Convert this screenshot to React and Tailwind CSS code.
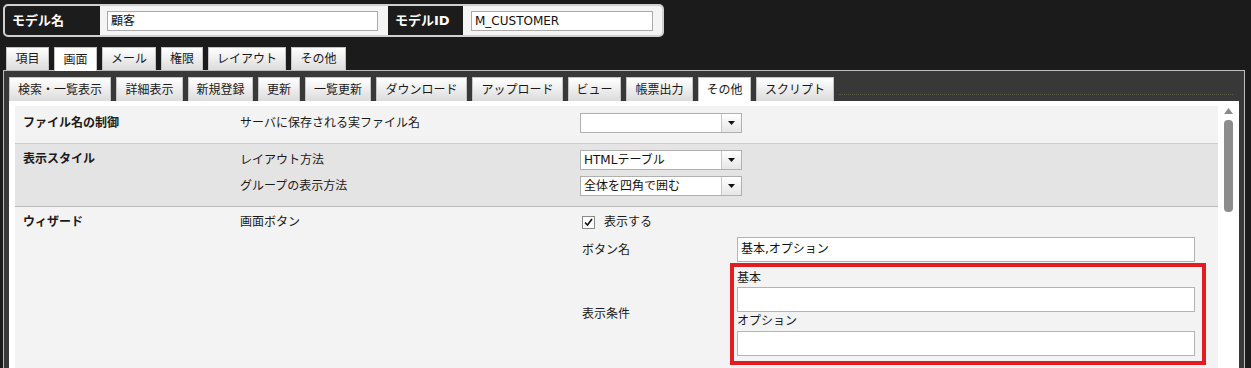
import React from 'react';

const mainTabs = [
  { label: '項目', w: 'w-[43px]' },
  { label: '画面', w: 'w-[43px]', active: true },
  { label: 'メール', w: 'w-[54px]' },
  { label: '権限', w: 'w-[42px]' },
  { label: 'レイアウト', w: 'w-[78px]' },
  { label: 'その他', w: 'w-[55px]' },
];

const subTabs = [
  { label: '検索・一覧表示', w: 'w-[102px]' },
  { label: '詳細表示', w: 'w-[67px]' },
  { label: '新規登録', w: 'w-[65px]' },
  { label: '更新', w: 'w-[42px]' },
  { label: '一覧更新', w: 'w-[66px]' },
  { label: 'ダウンロード', w: 'w-[91px]' },
  { label: 'アップロード', w: 'w-[91px]' },
  { label: 'ビュー', w: 'w-[53px]' },
  { label: '帳票出力', w: 'w-[67px]' },
  { label: 'その他', w: 'w-[53px]', active: true },
  { label: 'スクリプト', w: 'w-[78px]' },
];

const Tab = ({ label, w, active, h }) => (
  <div
    className={`${w} ${h} flex items-center justify-center border border-b-0 border-[#c4c4c4] text-[12px] text-[#1a1a1a] ${
      active ? 'bg-white relative z-10' : 'bg-gradient-to-b from-white to-[#dcdcdc]'
    }`}
  >
    {label}
  </div>
);

const Select = ({ value }) => (
  <div className="w-[162px] h-[20px] flex border border-[#b0b0b0] bg-white">
    <div className="flex-1 px-[3px] text-[12px] leading-[18px] text-[#111]">{value}</div>
    <div className="w-[20px] h-full border-l border-[#c8c8c8] bg-gradient-to-b from-white to-[#e6e6e6] flex items-center justify-center">
      <svg width="7" height="4" viewBox="0 0 7 4">
        <path d="M0 0 H7 L3.5 4 Z" fill="#111" />
      </svg>
    </div>
  </div>
);

const TextBox = ({ value }) => (
  <div className="w-[458px] h-[25px] border border-[#b4b4b4] bg-white px-[3px] text-[12px] leading-[23px] text-[#111]">
    {value}
  </div>
);

export default function App() {
  return (
    <div className="w-[1251px] h-[368px] overflow-hidden bg-[#1b1b1b] font-[family-name:'DejaVu_Sans','Noto_Sans_CJK_JP',sans-serif]">
      {/* header */}
      <div className="pt-[4px] pl-[3px]">
        <div className="w-[661px] h-[33px] flex items-stretch border-2 border-[#d0d0d0] rounded-[5px] bg-[#f4f4f4] overflow-hidden">
          <div className="w-[95px] bg-[#1c1c1c] text-white font-bold text-[13px] pl-[7px] flex items-center">モデル名</div>
          <div className="flex items-center ml-[7px]">
            <div className="w-[271px] h-[20px] border border-[#aaa] bg-white px-[3px] text-[12px] leading-[18px] text-[#111]">顧客</div>
          </div>
          <div className="w-[75px] ml-[10px] bg-[#1c1c1c] text-white font-bold text-[13px] pl-[7px] flex items-center">モデルID</div>
          <div className="flex items-center ml-[8px]">
            <div className="w-[182px] h-[20px] border border-[#aaa] bg-white px-[3px] text-[12px] leading-[18px] text-[#111]">M_CUSTOMER</div>
          </div>
        </div>
      </div>

      {/* main tabs */}
      <div className="mt-[10px] pl-[6px] h-[23px] flex gap-[5px]">
        {mainTabs.map((t) => (
          <Tab key={t.label} {...t} h={t.active ? 'h-[24px]' : 'h-[23px]'} />
        ))}
      </div>

      {/* panel */}
      <div className="ml-[3px] w-[1242px] h-[300px] border border-b-0 border-[#bdbdbd] bg-[#383838]">
        <div className="pt-[6px] pl-[5px] pr-[11px] h-[30px] flex gap-[5px]">
          {subTabs.map((t) => (
            <Tab key={t.label} {...t} h="h-[24px]" />
          ))}
          <div className="flex-1 h-[18px] border-b border-dotted border-[#5a5a4a]" />
        </div>

        <div className="ml-[5px] mr-[5px] h-[267px] bg-white pt-[5px] pl-[6px] flex">
          {/* rows */}
          <div className="w-[1203px] flex flex-col text-[12px] text-[#1a1a1a]">
            <div className="h-[38px] pt-[7px] flex bg-[#f3f3f3] border-b border-[#cdcdcd]">
              <div className="w-[225px] pl-[8px] font-bold leading-[20px]">ファイル名の制御</div>
              <div className="w-[340px] leading-[20px]">サーバに保存される実ファイル名</div>
              <div>
                <Select value="" />
              </div>
            </div>

            <div className="h-[63px] pt-[6px] flex bg-[#e4e4e4] border-b border-[#bcbcbc]">
              <div className="w-[225px] pl-[8px] font-bold leading-[18px]">表示スタイル</div>
              <div className="w-[340px] flex flex-col gap-[6px]">
                <div className="leading-[20px]">レイアウト方法</div>
                <div className="leading-[20px]">グループの表示方法</div>
              </div>
              <div className="flex flex-col gap-[6px]">
                <Select value="HTMLテーブル" />
                <Select value="全体を四角で囲む" />
              </div>
            </div>

            <div className="flex-1 pt-[5px] flex bg-[#f3f3f3]">
              <div className="w-[225px] pl-[8px] font-bold leading-[20px]">ウィザード</div>
              <div className="w-[340px] leading-[20px]">画面ボタン</div>
              <div className="flex flex-col">
                <div className="h-[20px] pl-[2px] flex items-center gap-[9px]">
                  <div className="w-[13px] h-[13px] border border-[#8a8a8a] bg-white flex items-center justify-center">
                    <svg width="9" height="9" viewBox="0 0 9 9">
                      <path d="M1 4.5 L3.5 7 L8 1" fill="none" stroke="#111" strokeWidth="1.6" />
                    </svg>
                  </div>
                  <span>表示する</span>
                </div>
                <div className="mt-[5px] flex items-center">
                  <div className="w-[150px] pl-[2px]">ボタン名</div>
                  <div className="ml-[7px]">
                    <TextBox value="基本,オプション" />
                  </div>
                </div>
                <div className="mt-[1px] flex items-center">
                  <div className="w-[150px] pl-[2px]">表示条件</div>
                  <div className="w-[476px] border-4 border-[#e21d22] pt-[2px] pb-[5px] pl-[3px]">
                    <div className="h-[18px] leading-[18px]">基本</div>
                    <TextBox value="" />
                    <div className="h-[19px] leading-[19px]">オプション</div>
                    <TextBox value="" />
                  </div>
                </div>
              </div>
            </div>
          </div>

          {/* scrollbar */}
          <div className="w-[20px] flex flex-col items-center pt-[2px] pl-[1px]">
            <svg width="9" height="6" viewBox="0 0 9 6">
              <path d="M4.5 0 L9 6 H0 Z" fill="#8a8a8a" />
            </svg>
            <div className="mt-[6px] w-[9px] h-[92px] rounded-[4px] bg-[#8c8c8c]" />
          </div>
        </div>
      </div>
    </div>
  );
}
